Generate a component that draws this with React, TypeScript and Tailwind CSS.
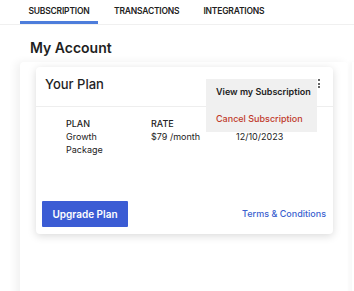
import React from "react";

export default function App() {
  return (
    <div className="w-[354px] h-[291px] overflow-hidden bg-white font-['Inter',sans-serif] text-[#222]">
      {/* Tabs */}
      <div className="flex h-[25px] border-b border-[#f0f0f0] pl-[20px]">
        <div className="w-[78px] border-b-[3px] border-[#4d7ddb] flex justify-center pt-[5px] text-[8.5px] font-semibold tracking-[-0.2px]">
          SUBSCRIPTION
        </div>
        <div className="ml-[16px] pt-[5px] text-[8.5px] font-semibold tracking-[-0.2px]">TRANSACTIONS</div>
        <div className="ml-[24px] pt-[5px] text-[8.5px] font-semibold tracking-[-0.2px]">INTEGRATIONS</div>
      </div>

      <h1 className="pl-[30px] pt-[14px] text-[14px] font-semibold leading-[17px] text-[#1f1f1f]">My Account</h1>

      <div className="flex mt-[6px] gap-[4px]">
        {/* Main panel */}
        <div className="ml-[20px] w-[328px] h-[240px] bg-white shadow-[-4px_0_8px_rgba(0,0,0,0.06)] rounded-t-[4px] pt-[5px] pl-[16px]">
          <div className="relative w-[297px] h-[167px] bg-white rounded-[4px] shadow-[0_2px_8px_rgba(0,0,0,0.15)] flex flex-col">
            <div className="h-[40px] flex items-start justify-between pl-[9px] pr-[13px] pt-[8px] border-b border-[#eeeeee]">
              <span className="text-[13px] font-medium text-[#1f1f1f]">Your Plan</span>
              <span className="relative z-10 mt-[4px] flex flex-col gap-[1.5px]">
                <span className="w-[2px] h-[2px] bg-[#333] rounded-full" />
                <span className="w-[2px] h-[2px] bg-[#333] rounded-full" />
                <span className="w-[2px] h-[2px] bg-[#333] rounded-full" />
              </span>
            </div>
            <div className="flex pl-[30px] pt-[10px] text-[9px] leading-[13px] text-[#222]">
              <div className="w-[85px]">
                <div className="font-medium">PLAN</div>
                <div>Growth</div>
                <div>Package</div>
              </div>
              <div className="w-[85px]">
                <div className="font-medium">RATE</div>
                <div>$79 /month</div>
              </div>
              <div>
                <div>&nbsp;</div>
                <div>12/10/2023</div>
              </div>
            </div>
            <div className="mt-auto flex items-center justify-between pl-[6px] pr-[7px] pb-[7px]">
              <button className="w-[86px] h-[26px] bg-[#3b5cd4] text-white text-[10px] font-semibold rounded-[1px]">
                Upgrade Plan
              </button>
              <span className="text-[9px] font-medium text-[#3b5fcf]">Terms &amp; Conditions</span>
            </div>

            {/* Dropdown menu */}
            <div className="absolute left-[170px] top-[12px] w-[111px] h-[53px] bg-[#f0f0f0] flex flex-col pl-[10px] pt-[7px]">
              <span className="text-[9px] font-semibold text-[#222] leading-[12px]">View my Subscription</span>
              <span className="mt-[15px] text-[9px] font-medium text-[#c0392b] leading-[12px]">Cancel Subscription</span>
            </div>
          </div>
        </div>
        {/* Right panel edge */}
        <div className="flex-1 h-[240px] bg-white shadow-[-1px_0_4px_rgba(0,0,0,0.08)]" />
      </div>
    </div>
  );
}
